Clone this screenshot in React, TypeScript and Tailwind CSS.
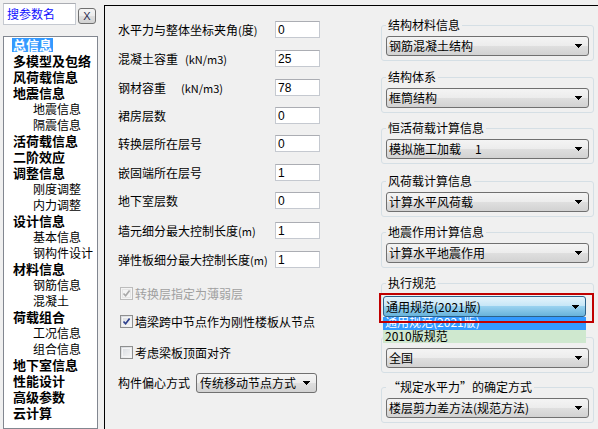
import React from "react";

type TreeNode = { t: string; child?: boolean; sel?: boolean };

const tree: TreeNode[] = [
  { t: "总信息", sel: true },
  { t: "多模型及包络" },
  { t: "风荷载信息" },
  { t: "地震信息" },
  { t: "地震信息", child: true },
  { t: "隔震信息", child: true },
  { t: "活荷载信息" },
  { t: "二阶效应" },
  { t: "调整信息" },
  { t: "刚度调整", child: true },
  { t: "内力调整", child: true },
  { t: "设计信息" },
  { t: "基本信息", child: true },
  { t: "钢构件设计", child: true },
  { t: "材料信息" },
  { t: "钢筋信息", child: true },
  { t: "混凝土", child: true },
  { t: "荷载组合" },
  { t: "工况信息", child: true },
  { t: "组合信息", child: true },
  { t: "地下室信息" },
  { t: "性能设计" },
  { t: "高级参数" },
  { t: "云计算" },
];

const Unit = ({ children, className = "" }: { children: React.ReactNode; className?: string }) => (
  <span className={`text-[11px] ${className}`}>{children}</span>
);

const fields: { label: React.ReactNode; v: string; mt: string }[] = [
  { label: <>水平力与整体坐标夹角<Unit>(</Unit>度<Unit>)</Unit></>, v: "0", mt: "mt-[15px]" },
  { label: <>混凝土容重<Unit className="ml-[7px]">(kN/m3)</Unit></>, v: "25", mt: "mt-[12px]" },
  { label: <>钢材容重<Unit className="ml-[15px]">(kN/m3)</Unit></>, v: "78", mt: "mt-[12px]" },
  { label: <>裙房层数</>, v: "0", mt: "mt-[11px]" },
  { label: <>转换层所在层号</>, v: "0", mt: "mt-[11px]" },
  { label: <>嵌固端所在层号</>, v: "1", mt: "mt-[12px]" },
  { label: <>地下室层数</>, v: "0", mt: "mt-[11px]" },
  { label: <>墙元细分最大控制长度<Unit>(m)</Unit></>, v: "1", mt: "mt-[13px]" },
  { label: <>弹性板细分最大控制长度<Unit>(m)</Unit></>, v: "1", mt: "mt-[12px]" },
];

function Arrow() {
  return (
    <svg width="7" height="4" viewBox="0 0 7 4" className="absolute right-[6px] top-1/2 -translate-y-1/2">
      <path d="M0 0h7v1h-1v1h-1v1h-1v1h-1v-1h-1v-1h-1v-1h-1z" fill="#000" />
    </svg>
  );
}

function Combo({
  children,
  className = "",
  pressed = false,
}: {
  children: React.ReactNode;
  className?: string;
  pressed?: boolean;
}) {
  return (
    <div
      className={`relative flex items-center rounded-[3px] border pl-[2px] text-[12px] leading-[14px] text-black ${
        pressed
          ? "border-[#2c628b] bg-[linear-gradient(to_bottom,#e5f4fc_0%,#c4e5f6_50%,#98d1ef_50%,#68b3db_100%)]"
          : "border-[#707070] bg-[linear-gradient(to_bottom,#f4f4f4_0%,#ececec_50%,#dfdfdf_50%,#d2d2d2_100%)]"
      } ${className}`}
    >
      <span className="whitespace-nowrap">{children}</span>
      <Arrow />
    </div>
  );
}

function Check({ checked = false, disabled = false }: { checked?: boolean; disabled?: boolean }) {
  return (
    <span
      className={`relative inline-block h-[13px] w-[13px] shrink-0 border ${
        disabled
          ? "border-[#bcbcbc] bg-[#f4f4f4]"
          : "border-[#8e8f8f] bg-[linear-gradient(135deg,#d6d9de_0%,#f7f7f7_100%)]"
      }`}
    >
      <span className={`absolute inset-[1px] border ${disabled ? "border-[#e6e6e6]" : "border-[#f4f4f4]"}`} />
      {checked && (
        <svg width="11" height="11" viewBox="0 0 11 11" className="absolute left-0 top-0">
          <path
            d="M2.5 5.5 L4.6 7.8 L8.6 2.6"
            fill="none"
            stroke={disabled ? "#a8a8a8" : "#2c3f8c"}
            strokeWidth="1.7"
          />
        </svg>
      )}
    </span>
  );
}

type Group = { title?: string; value: React.ReactNode; gap: string; pressed?: boolean };

const groups: Group[] = [
  { title: "结构材料信息", value: "钢筋混凝土结构", gap: "mt-[12px]" },
  { title: "结构体系", value: "框筒结构", gap: "mt-[9px]" },
  {
    title: "恒活荷载计算信息",
    value: (
      <>
        模拟施工加载<span className="ml-[14px]">1</span>
      </>
    ),
    gap: "mt-[8px]",
  },
  { title: "风荷载计算信息", value: "计算水平风荷载", gap: "mt-[10px]" },
  { title: "地震作用计算信息", value: "计算水平地震作用", gap: "mt-[8px]" },
  { title: "执行规范", value: "通用规范(2021版)", gap: "mt-[8px]", pressed: true },
  // caption sits under the open list, so only its slot is kept
  { value: "全国", gap: "mt-[8px]" },
  { title: "“规定水平力”的确定方式", value: "楼层剪力差方法(规范方法)", gap: "mt-[7px]" },
];

const inputCls =
  "flex items-center border border-[#c5c9d0] border-t-[#abadb3] bg-white font-['Liberation_Sans',sans-serif] text-[12px] leading-[14px] text-black";

export default function App() {
  return (
    <div className="relative flex h-[429px] w-[598px] overflow-hidden bg-[#f0f0f0] font-['Noto_Sans_CJK_SC',sans-serif] text-black">
      {/* parameter tree */}
      <div className="flex w-[104px] shrink-0 flex-col pl-[3px] pt-[3px]">
        <div className="flex items-start gap-[2px]">
          <div className="flex h-[22px] w-[73px] items-center border border-[#c5c9d0] border-t-[#abadb3] bg-white pl-[3px] text-[12px] leading-[14px] text-[#1010ff]">
            搜参数名
          </div>
          <div className="mt-[5px] flex h-[16px] w-[18px] items-center justify-center rounded-[3px] border border-[#707070] bg-[linear-gradient(to_bottom,#f4f4f4_0%,#ececec_50%,#dfdfdf_50%,#d2d2d2_100%)] font-['Liberation_Sans',sans-serif] text-[11px] leading-none text-[#2a2a50]">
            X
          </div>
        </div>
        <div className="mt-[11px] w-[95px] flex-1 border border-[#828790] bg-white">
          {tree.map((n, i) => (
            <div key={i} className={`flex h-[16px] items-center ${n.child ? "pl-[29px]" : "pl-[8px]"}`}>
              {n.child ? (
                <span className="whitespace-nowrap text-[12px] leading-[14px]">{n.t}</span>
              ) : (
                <span
                  className={`whitespace-nowrap px-[1px] text-[13px] font-bold leading-[14px] ${
                    n.sel ? "bg-[#3399ff] text-white" : ""
                  }`}
                >
                  {n.t}
                </span>
              )}
            </div>
          ))}
        </div>
      </div>

      {/* settings page */}
      <div className="mt-[5px] flex flex-1 border-l border-t border-black">
        <div className="flex w-[276px] shrink-0 flex-col pl-[13px]">
          {fields.map((f, i) => (
            <div key={i} className={`flex h-[17px] items-center ${f.mt}`}>
              <div className="w-[157px] whitespace-nowrap text-[12px] leading-[14px]">{f.label}</div>
              <div className={`h-[17px] w-[45px] pl-[2px] ${inputCls}`}>{f.v}</div>
            </div>
          ))}

          <div className="mt-[19px] flex h-[13px] items-center pl-[2px]">
            <Check checked disabled />
            <span className="ml-[2px] whitespace-nowrap text-[12px] leading-[14px] text-[#a0a0a0]">
              转换层指定为薄弱层
            </span>
          </div>
          <div className="mt-[15px] flex h-[13px] items-center pl-[2px]">
            <Check checked />
            <span className="ml-[2px] whitespace-nowrap text-[12px] leading-[14px]">
              墙梁跨中节点作为刚性楼板从节点
            </span>
          </div>
          <div className="mt-[18px] flex h-[13px] items-center pl-[2px]">
            <Check />
            <span className="ml-[2px] whitespace-nowrap text-[12px] leading-[14px]">考虑梁板顶面对齐</span>
          </div>
          <div className="mt-[14px] flex h-[20px] items-center">
            <span className="w-[78px] whitespace-nowrap text-[12px] leading-[14px]">构件偏心方式</span>
            <Combo className="h-[20px] w-[121px] pl-[3px]">传统移动节点方式</Combo>
          </div>
        </div>

        <div className="flex flex-col">
          {groups.map((g, i) => (
            <fieldset
              key={i}
              className={`w-[213px] rounded-[3px] border border-[#d5dfe5] px-[4px] ${
                g.pressed ? "pb-[4px] pt-[6px]" : "pb-[4px] pt-[4px]"
              } ${g.gap}`}
            >
              {g.title ? (
                <legend className="px-[2px] text-[12px] leading-[14px]">{g.title}</legend>
              ) : (
                <legend className="h-[14px] w-[28px]" />
              )}
              {g.pressed ? (
                <Combo pressed className="-ml-[3px] h-[21px] w-[203px]">
                  {g.value}
                </Combo>
              ) : (
                <Combo className="h-[20px] w-[203px]">{g.value}</Combo>
              )}
            </fieldset>
          ))}
        </div>
      </div>

      {/* open drop-down list of the code selector */}
      <div className="absolute left-[383px] top-[317px] w-[203px] text-[12px]">
        <div className="h-[13px] overflow-hidden bg-[#3399ff] pl-[2px] text-white">
          <div className="-mt-[2px] whitespace-nowrap leading-[14px]">通用规范(2021版)</div>
        </div>
        <div className="h-[13px] overflow-hidden bg-[#cfe8cf] pl-[2px] text-black">
          <div className="-mt-[1px] whitespace-nowrap leading-[14px]">2010版规范</div>
        </div>
      </div>

      {/* highlight frame */}
      <div className="absolute left-[379px] top-[293px] h-[30px] w-[215px] border-2 border-[#c00000]" />
    </div>
  );
}
